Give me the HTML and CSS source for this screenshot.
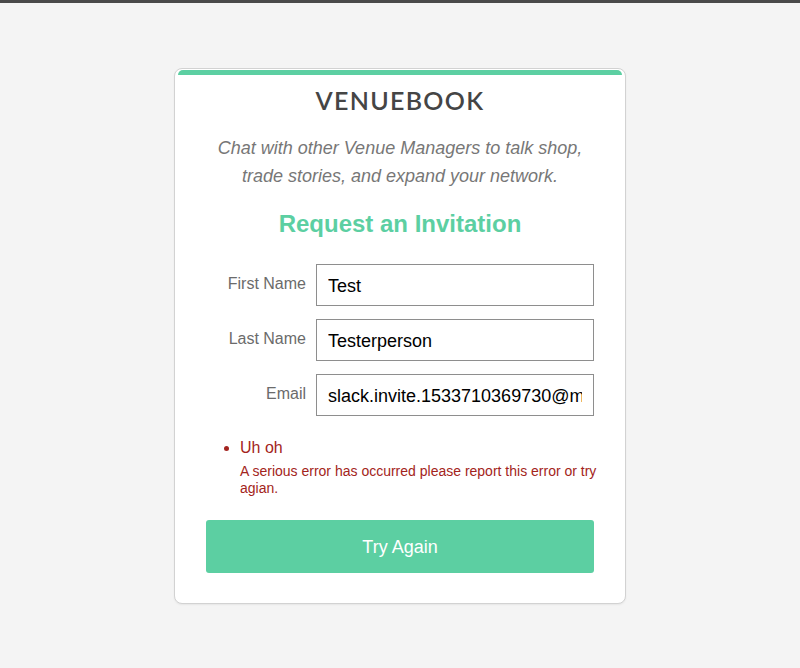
FILE: index.html
```html
<!DOCTYPE html>
<html lang="en">
<head>
<meta charset="utf-8">
<title>VenueBook - Request an Invitation</title>
<link rel="stylesheet" href="styles.css">
</head>
<body>
<div class="topbar"></div>
<main class="page">
  <section class="card">
    <div class="accent"></div>
    <h1 class="brand">VENUEBOOK</h1>
    <p class="intro">Chat with other Venue Managers to talk shop, trade stories, and expand your network.</p>
    <h2 class="heading">Request an Invitation</h2>
    <form class="form">
      <div class="row">
        <label class="label" for="first">First Name</label>
        <input class="field" id="first" type="text" value="Test">
      </div>
      <div class="row">
        <label class="label" for="last">Last Name</label>
        <input class="field" id="last" type="text" value="Testerperson">
      </div>
      <div class="row">
        <label class="label" for="email">Email</label>
        <input class="field" id="email" type="text" value="slack.invite.1533710369730@mailinator.com">
      </div>
      <ul class="errors">
        <li class="error">
          <span class="error-title">Uh oh</span>
          <span class="error-detail">A serious error has occurred please report this error or try agian.</span>
        </li>
      </ul>
      <button class="submit" type="button">Try Again</button>
    </form>
  </section>
</main>
</body>
</html>
```

FILE: styles.css
```css
html, body {
  margin: 0;
  padding: 0;
}
body {
  background: #f4f4f4;
  font-family: "Liberation Sans", Arial, sans-serif;
  min-height: 668px;
}
.topbar {
  height: 3px;
  background: #4a4a4a;
}
.page {
  display: flex;
  justify-content: center;
  padding-top: 65px;
}
.card {
  box-sizing: border-box;
  width: 452px;
  background: #fff;
  border: 1px solid #d2d2d2;
  border-radius: 8px;
  padding: 1px 1px 30px;
  box-shadow: 0 1px 2px rgba(0,0,0,0.06);
}
.accent {
  height: 5px;
  margin: 0 2px;
  background: #5ccfa2;
  border-radius: 6px 6px 0 0;
}
.brand {
  margin: 9px 0 0;
  font-family: Lato, "Open Sans", sans-serif;
  font-weight: 600;
  font-size: 25px;
  line-height: 32px;
  letter-spacing: 1.3px;
  color: #454545;
  text-align: center;
}
.intro {
  margin: 18px 40px 0;
  font-style: italic;
  font-size: 18px;
  line-height: 28px;
  color: #777;
  text-align: center;
}
.heading {
  margin: 19px 0 0;
  font-size: 24px;
  line-height: 30px;
  font-weight: bold;
  color: #5ccfa2;
  text-align: center;
}
.form {
  margin: 25px 30px 0;
  display: flex;
  flex-direction: column;
}
.row {
  display: flex;
  align-items: center;
  gap: 10px;
  margin-bottom: 13px;
}
.row:last-of-type {
  margin-bottom: 0;
}
.label {
  width: 100px;
  text-align: right;
  font-size: 16px;
  color: #6b6b6b;
  margin-top: -3px;
}
.field {
  box-sizing: border-box;
  width: 278px;
  height: 42px;
  border: 1px solid #8e8e8e;
  border-radius: 0;
  padding: 2px 11px 0;
  font-family: "Liberation Sans", Arial, sans-serif;
  font-size: 18px;
  color: #000;
  background: #fff;
  outline: none;
}
.errors {
  margin: 22px -8px 0 0;
  padding: 0 0 0 34px;
  color: #a32420;
}
.error-title {
  display: block;
  font-size: 16px;
  line-height: 20px;
}
.error-detail {
  display: block;
  margin-top: 5px;
  font-size: 14px;
  line-height: 17px;
}
.submit {
  margin-top: 23px;
  height: 53px;
  border: none;
  border-radius: 3px;
  background: #5ccfa2;
  color: #fff;
  font-family: "Liberation Sans", Arial, sans-serif;
  font-size: 18px;
  padding-top: 2px;
  cursor: pointer;
}
```
